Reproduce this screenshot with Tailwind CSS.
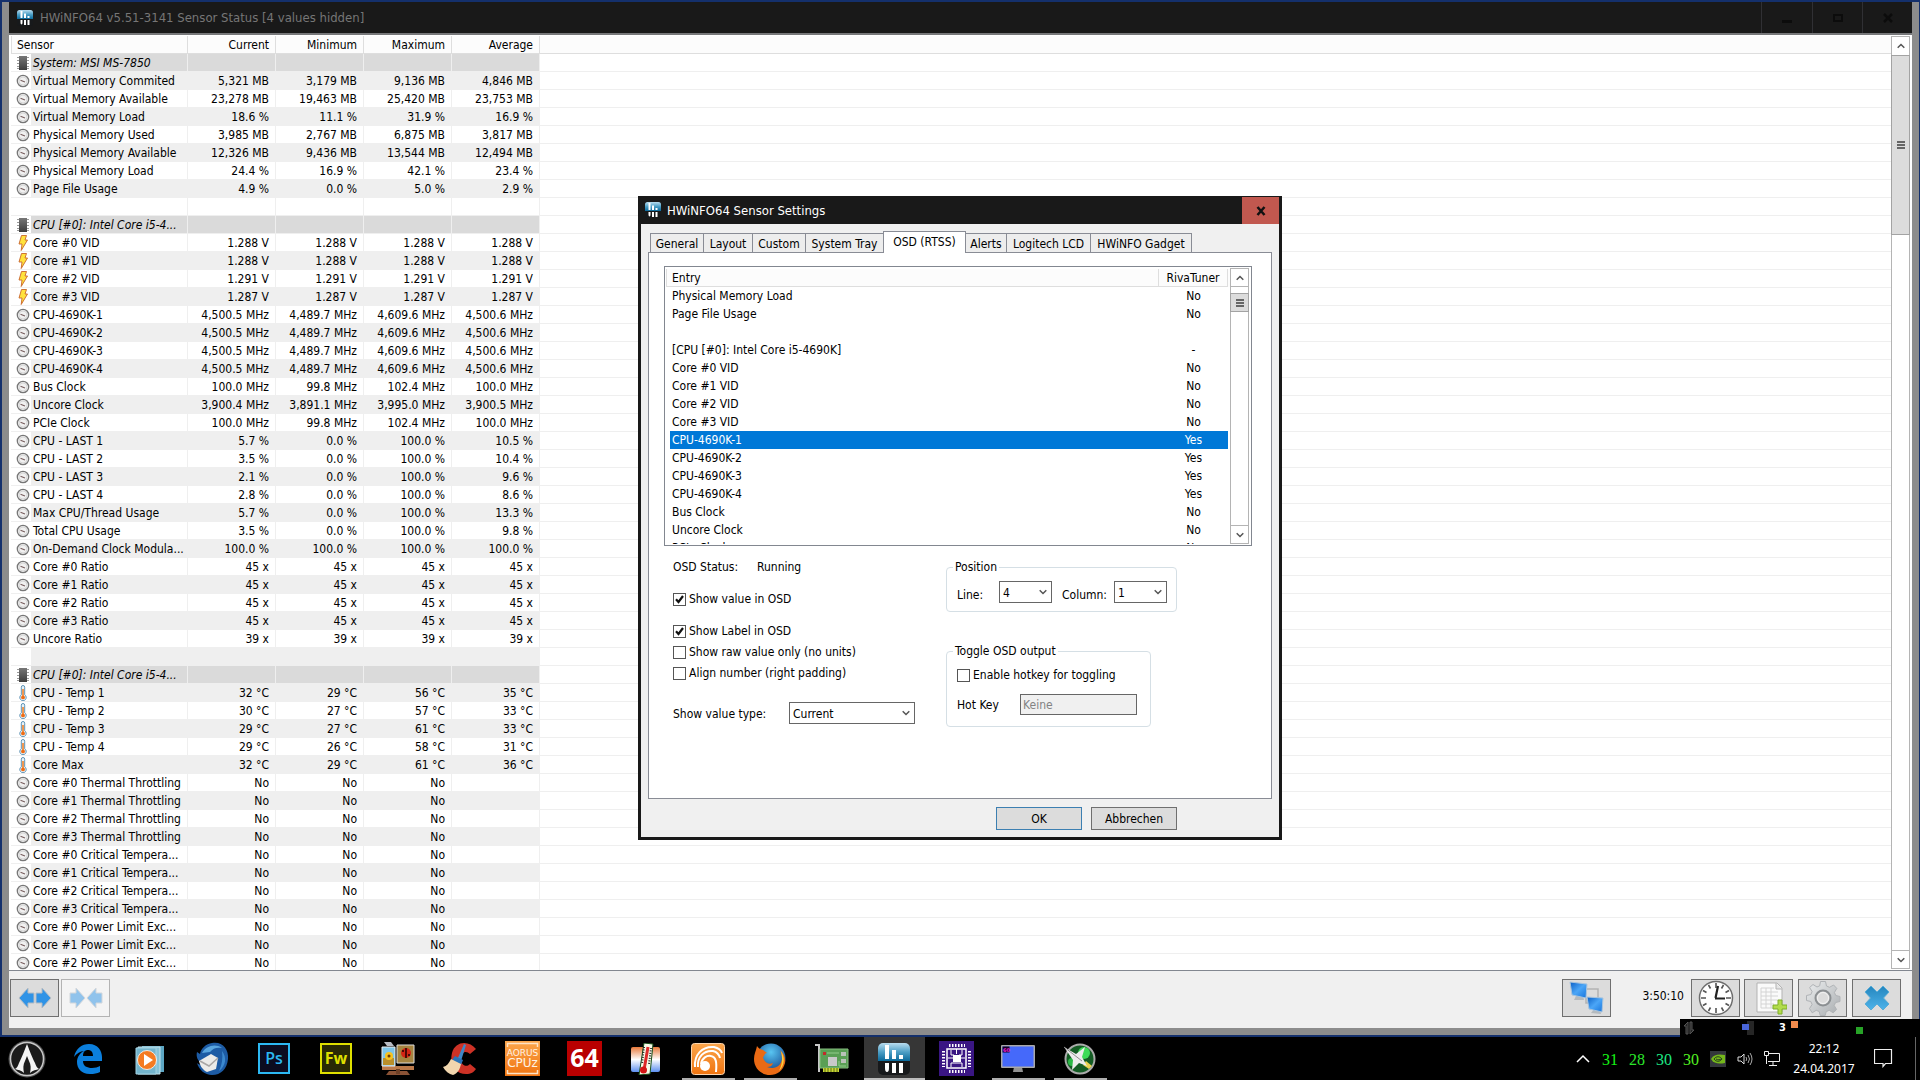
<!DOCTYPE html>
<html lang="de">
<head>
  <meta charset="UTF-8" />
  <meta name="viewport" content="width=device-width, initial-scale=1" />
  <title>HWiNFO64 Sensor Status</title>
  <script src="https://cdn.jsdelivr.net/npm/@tailwindcss/browser@4"></script>
</head>
<body class="relative flex h-screen flex-col overflow-hidden bg-[#14306c] font-['DejaVu_Sans_Condensed','Noto_Sans',sans-serif] text-xs text-black">

  <!-- Shared icons -->
  <svg class="absolute size-0" xmlns="http://www.w3.org/2000/svg">
    <defs>
      <linearGradient id="blueTop" x1="0" y1="0" x2="0" y2="1">
        <stop offset="0" stop-color="#b9dcee" /><stop offset=".5" stop-color="#4d9fc6" /><stop offset="1" stop-color="#0a6899" />
      </linearGradient>
      <linearGradient id="chipGrad" x1="0" y1="0" x2="0" y2="1">
        <stop offset="0" stop-color="#777" /><stop offset="1" stop-color="#3d3d3d" />
      </linearGradient>
      <linearGradient id="orangeGrad" x1="0" y1="0" x2="0" y2="1">
        <stop offset="0" stop-color="#fba64c" /><stop offset="1" stop-color="#f07410" />
      </linearGradient>
      <linearGradient id="screenGrad" x1="0" y1="0" x2="1" y2="1">
        <stop offset="0" stop-color="#0b5fc6" /><stop offset=".5" stop-color="#4ba6f7" /><stop offset="1" stop-color="#1673dc" />
      </linearGradient>
      <linearGradient id="crossGrad" x1="0" y1="0" x2="0" y2="1">
        <stop offset="0" stop-color="#2586be" /><stop offset="1" stop-color="#4db3ea" />
      </linearGradient>
      <linearGradient id="gearGrad" x1="0" y1="0" x2="1" y2="1">
        <stop offset="0" stop-color="#eceeef" /><stop offset="1" stop-color="#a9adb0" />
      </linearGradient>
      <radialGradient id="foxBlue" cx=".5" cy=".3" r=".7">
        <stop offset="0" stop-color="#59c5f2" /><stop offset="1" stop-color="#12468e" />
      </radialGradient>
    </defs>
    <symbol id="hwinfo" viewBox="0 0 32 32">
      <rect width="32" height="32" rx="5" fill="#17191b" />
      <path d="M5 0h22a5 5 0 0 1 5 5v13H0V5a5 5 0 0 1 5-5z" fill="url(#blueTop)" />
      <path d="M7 2h4v14H7zM14 7h4v9h-4zM21 12h4v4h-4zM7 20h4v5q0 4-2 4t-2-4zM14 20h4v10h-4zM21 20h4v10h-4z" fill="#fff" />
    </symbol>
    <symbol id="chip" viewBox="0 0 12 14">
      <path d="M0 1.500h12M0 4.500h12M0 7.500h12M0 10.500h12M0 12.500h12" stroke="#999" />
      <rect x="2" width="8" height="14" fill="url(#chipGrad)" />
    </symbol>
    <symbol id="gauge" viewBox="0 0 14 14">
      <circle cx="7" cy="7" r="5.700" fill="#f1f1f1" stroke="#777" stroke-width="1.300" />
      <circle cx="7" cy="7" r="4" fill="none" stroke="#cfcfcf" stroke-width=".8" />
      <path d="M4.500 6.300 9 8" stroke="#765c5c" stroke-width="1.100" />
    </symbol>
    <symbol id="bolt" viewBox="0 0 10 16">
      <path d="M3.500.5h5L7 5h2.500L3.200 15.500 4 9H1z" fill="#ffe23c" stroke="#c8642a" stroke-width=".9" />
    </symbol>
    <symbol id="thermo" viewBox="0 0 8 16">
      <path d="M2.300 2.200a1.700 1.700 0 0 1 3.400 0v7.600a3.200 3.200 0 1 1-3.400 0z" fill="#e8f3fa" stroke="#5e93b5" />
      <path d="M4 4v8" stroke="#f07a1c" stroke-width="1.500" />
      <circle cx="4" cy="12.400" r="1.900" fill="#ef6c14" />
    </symbol>
    <symbol id="chevUp" viewBox="0 0 8 6"><path d="M.7 4.800 4 1.500l3.300 3.300" fill="none" stroke="#555" stroke-width="1.500" /></symbol>
    <symbol id="chevDown" viewBox="0 0 8 6"><path d="M.7 1.200 4 4.500l3.300-3.300" fill="none" stroke="#555" stroke-width="1.500" /></symbol>
    <symbol id="grip" viewBox="0 0 8 8"><path d="M0 1h8M0 4h8M0 7h8" stroke="#666" stroke-width="2" /></symbol>
    <symbol id="check" viewBox="0 0 13 13"><path d="M3 6.200 5.500 9 10 3" fill="none" stroke="#111" stroke-width="2.200" /></symbol>
    <symbol id="arrowLeft" viewBox="0 0 17 22"><path d="M1 11 10 1v5h6v10h-6v5z" fill="#2f93e6" stroke="#b4bcc4" /></symbol>
    <symbol id="arrowRight" viewBox="0 0 17 22"><path d="M16 11 7 1v5H1v10h6v5z" fill="#2f93e6" stroke="#b4bcc4" /></symbol>
  </svg>

  <!-- Sensor status window -->
  <div class="mt-0.5 mr-px mb-0.5 ml-0.5 flex min-h-0 flex-1 flex-col border-x-7 border-b-7 border-[#8c8c8c] bg-[#f0f0f0]">
    <header class="flex h-[33px] shrink-0 items-stretch border-b-2 border-[#77787a] bg-[#191919]">
      <div class="flex flex-1 items-center gap-[7px] pl-2">
        <svg class="size-4"><use href="#hwinfo" /></svg>
        <h1 class="pt-px text-[13px] text-[#767676]">HWiNFO64 v5.51-3141 Sensor Status [4 values hidden]</h1>
      </div>
      <button class="grid w-[51px] place-items-center border-l border-[#303034]" aria-label="Minimize">
        <svg class="h-3 w-2.5" viewBox="0 0 10 12"><path d="M0 9.500h10" stroke="#0c0c0c" stroke-width="3" /></svg>
      </button>
      <button class="grid w-[50px] place-items-center border-l border-[#303034]" aria-label="Maximize">
        <svg class="h-2 w-2.5" viewBox="0 0 10 8"><path d="M1 1h8v6H1z" fill="none" stroke="#0c0c0c" stroke-width="2" /></svg>
      </button>
      <button class="grid w-[50px] place-items-center border-l border-[#303034]" aria-label="Close">
        <svg class="size-2.5" viewBox="0 0 10 10"><path d="m1 1 8 8m0-8L1 9" stroke="#0c0c0c" stroke-width="2.500" /></svg>
      </button>
    </header>

    <div class="flex min-h-0 flex-1 border-b border-[#828790] bg-white pt-px pr-0.5 pl-0.5">
      <div class="min-w-0 flex-1 overflow-hidden">
        <table class="w-full table-fixed border-separate border-spacing-0">
          <colgroup>
            <col class="w-5" /><col class="w-[157px]" /><col class="w-[88px]" /><col class="w-[88px]" /><col class="w-[88px]" /><col class="w-[88px]" /><col />
          </colgroup>
          <thead>
            <tr class="h-[18px] bg-[#fcfcfc] leading-4">
              <th colspan="2" class="border-r border-b border-l border-[#dedede] p-0 pt-px pl-[5px] text-left font-normal">Sensor</th>
              <th class="border-r border-b border-[#dedede] p-0 pt-px pr-1.5 text-right font-normal">Current</th>
              <th class="border-r border-b border-[#dedede] p-0 pt-px pr-1.5 text-right font-normal">Minimum</th>
              <th class="border-r border-b border-[#dedede] p-0 pt-px pr-1.5 text-right font-normal">Maximum</th>
              <th class="border-r border-b border-[#dedede] p-0 pt-px pr-1.5 text-right font-normal">Average</th>
              <th class="border-b border-[#dedede] p-0"></th>
            </tr>
          </thead>
          <tbody id="sensorRows"></tbody>
        </table>
      </div>
      <!-- Scrollbar -->
      <div class="mb-px flex w-[19px] flex-col border border-[#b4b4b4] bg-white">
        <button class="grid h-[18px] place-items-center" aria-label="Scroll up"><svg class="h-1.5 w-2"><use href="#chevUp" /></svg></button>
        <div class="-mx-px grid h-[180px] place-items-center border border-[#a3a3a3] bg-[#dcdcdc]"><svg class="size-2"><use href="#grip" /></svg></div>
        <button class="mt-auto grid h-[18px] place-items-center border-t border-[#b4b4b4]" aria-label="Scroll down"><svg class="h-1.5 w-2"><use href="#chevDown" /></svg></button>
      </div>
    </div>

    <!-- Toolbar -->
    <footer class="flex h-[57px] shrink-0 items-start gap-1 pt-2 pr-[11px] pl-px">
      <button class="flex h-[38px] w-[49px] items-center justify-center border border-[#6f6f6f] bg-[#dcdcdc]" aria-label="Expand columns">
        <svg class="h-[22px] w-[17px]"><use href="#arrowLeft" /></svg><svg class="h-[22px] w-[17px]"><use href="#arrowRight" /></svg>
      </button>
      <button class="-ml-0.5 flex h-[38px] w-[49px] items-center justify-center border border-[#b3b3b3] bg-[#f4f4f4]" aria-label="Shrink columns" disabled>
        <svg class="h-[22px] w-[17px] opacity-50"><use href="#arrowRight" /></svg><svg class="h-[22px] w-[17px] opacity-50"><use href="#arrowLeft" /></svg>
      </button>
      <button class="ml-auto grid h-[38px] w-[49px] place-items-center border border-[#6f6f6f] bg-[#dcdcdc]" aria-label="Remote sensors">
        <svg class="h-9 w-9" viewBox="0 0 36 36">
          <path d="M18 9h11v10M17 18v5h5" fill="none" stroke="#b2b2b2" stroke-width="1.500" />
          <path d="m8 14 6 1 1 5H5zM26 28l5 1 1 5-10-1z" fill="#b5babe" />
          <path d="m1 2 17 2-1 14-14-3z" fill="url(#screenGrad)" stroke="#a9c4dd" />
          <path d="m18 17 16 1-1 14-13-3z" fill="url(#screenGrad)" stroke="#a9c4dd" />
        </svg>
      </button>
      <span class="ml-[26px] w-[43px] pt-[9px] text-right whitespace-nowrap">3:50:10</span>
      <button class="ml-[3px] grid h-[38px] w-[49px] place-items-center border border-[#6f6f6f] bg-[#dcdcdc]" aria-label="Reset clock">
        <svg class="h-9 w-9" viewBox="0 0 36 36">
          <circle cx="18" cy="18" r="16.500" fill="#fff" stroke="#6e6e6e" stroke-width="1.500" />
          <g stroke="#555" stroke-width="1.600">
            <path d="M18 3v5M18 28v5M3 18h5M28 18h5" />
            <path d="m25.500 5-2 3.500M10.500 5l2 3.500M31 10.500l-3.500 2M5 10.500l3.500 2M31 25.500l-3.500-2M5 25.500l3.500-2M25.500 31l-2-3.500M10.500 31l2-3.500" />
          </g>
          <path d="M17.500 18 20 6M17 18.500h10" stroke="#222" stroke-width="2.200" fill="none" />
        </svg>
      </button>
      <button class="grid h-[38px] w-[49px] place-items-center border border-[#6f6f6f] bg-[#dcdcdc]" aria-label="Start logging">
        <svg class="h-9 w-9" viewBox="0 0 36 36">
          <path d="M6 3h20l5 5v24H6z" fill="#fafafa" stroke="#b3b3b3" />
          <path d="M25 3v6h6" fill="#e4e4e4" stroke="#b3b3b3" />
          <path d="M10 8h13M10 12h17M10 16h17M10 20h17M10 24h13M10 28h12M10 8v20M15 8v20M20 8v20" stroke="#d4d4d4" />
          <path d="M27 20h4v5h5v4h-5v5h-4v-5h-5v-4h5z" fill="#b2dc4b" stroke="#7fae2a" />
        </svg>
      </button>
      <button class="ml-px grid h-[38px] w-[49px] place-items-center border border-[#6f6f6f] bg-[#dcdcdc]" aria-label="Settings">
        <svg class="h-9 w-9" viewBox="0 0 36 36">
          <path d="M15.500 1.500h5l1 4.500 3 1.300L28.600 5l3.200 3.400-2.400 4.100 1.400 3 4.200 1v5l-4.400 1-1.400 3 2.400 4-3.400 3.300-4-2.500-3 1.400-1 3.800h-5l-1-4-3-1.200-4 2.500L4.500 28.500l2.600-4-1.300-3L1.500 20.500v-5l4.400-1 1.200-3-2.500-4L8 4.500 12 7l2.700-1.200z" fill="url(#gearGrad)" stroke="#b0b3b6" />
          <circle cx="18" cy="18" r="7.500" fill="#dcdcdc" stroke="#8b8f92" stroke-width="2" />
          <circle cx="18" cy="18" r="5.500" fill="#dcdcdc" stroke="#f3f3f3" />
        </svg>
      </button>
      <button class="ml-px grid h-[38px] w-[49px] place-items-center border border-[#6f6f6f] bg-[#dcdcdc]" aria-label="Quit">
        <svg class="h-[26px] w-[26px]" viewBox="0 0 26 26"><path d="m7 1 6 6 6-6 6 6-5.500 6 5.500 6-6 6-6-6-6 6-6-6 5.500-6L1 7z" fill="url(#crossGrad)" stroke="#59acd6" /></svg>
      </button>
    </footer>
  </div>

  <!-- Taskbar -->
  <nav class="flex h-[43px] shrink-0 items-stretch bg-black text-white">
    <a href="#" class="grid w-[57px] place-items-center" aria-label="Start">
      <svg class="-ml-1 size-10" viewBox="0 0 40 40">
        <circle cx="20" cy="20" r="18.500" fill="#555" /><circle cx="20" cy="20" r="16.500" fill="#1b1b1b" stroke="#c9c9c9" stroke-width="1.500" />
        <path d="M20 5c2 5 5 13 8 19 1 3 2 5 4 6-3 1-6 1-9 4 1-5 1-8-1-12l-2-5-2 5c-2 4-2 7-1 12-3-3-6-3-9-4 2-1 3-3 4-6 3-6 6-14 8-19z" fill="#f4f4f4" />
      </svg>
    </a>
    <a href="#" class="grid w-[62px] place-items-center" aria-label="Edge">
      <svg class="size-8" viewBox="0 0 32 32"><path d="M2 14C4 5 10 1 17 1c9 0 13 7 13 13v4H11c0 5 4 7 9 7 3 0 6-1 8-2v6c-3 1.500-6 2-10 2C9 31 5 25 5 19c0-5 3-9 7-11-4 .5-7 2-10 6zm9-1h10c0-4-2-6-5-6s-5 2-5 6z" fill="#0b7fdd" /></svg>
    </a>
    <a href="#" class="grid w-[62px] place-items-center" aria-label="Media Player">
      <svg class="h-8 w-8" viewBox="0 0 32 32">
        <path d="M8 3h22v26H8z" fill="#5da7c4" /><path d="M4 4h22v27H4z" fill="#86c3d8" stroke="#c6e3ec" /><path d="M2 5h20v26H2z" fill="#73b4cc" stroke="#a4d3e3" />
        <circle cx="13" cy="17" r="9.500" fill="#f47b22" stroke="#fff" stroke-width=".8" /><path d="m10 11 9 6-9 6z" fill="#fff" />
      </svg>
    </a>
    <a href="#" class="grid w-[62px] place-items-center" aria-label="Thunderbird">
      <svg class="size-9" viewBox="0 0 36 36">
        <path d="M18 2c10-2 17 6 16 16-1 10-7 16-16 16-7 0-13-5-15-12 2 2 4 2 6 1-6-3-7-8-6-12l3 2C7 7 12 3 18 2z" fill="#1d5ba4" />
        <path d="M8 12c4-7 13-10 20-5-5-1-9 0-12 4z" fill="#59a5de" /><path d="M28 10c5 6 4 15-3 20 3-6 4-13 3-20z" fill="#3c89ce" />
        <path d="m5 20 12-7 7 4-2 11-9 3c-4-2-7-6-8-11z" fill="#ecebe9" /><path d="m6 20 9 5 9-8" fill="none" stroke="#a9a6a5" stroke-width="1.500" />
      </svg>
    </a>
    <a href="#" class="grid w-[62px] place-items-center" aria-label="Photoshop">
      <svg class="h-8 w-8" viewBox="0 0 32 32"><rect x="1" y="1" width="30" height="29" fill="#0b0c20" stroke="#2cb8f2" stroke-width="2" /><text x="16" y="21" fill="#2cb8f2" text-anchor="middle" font-family="Open Sans, sans-serif" font-size="16" font-weight="600">Ps</text></svg>
    </a>
    <a href="#" class="grid w-[62px] place-items-center" aria-label="Fireworks">
      <svg class="h-8 w-8" viewBox="0 0 32 32"><rect x="1" y="1" width="30" height="29" fill="#292a05" stroke="#dfe000" stroke-width="2" /><text x="16" y="21" fill="#dfe000" text-anchor="middle" font-family="Open Sans, sans-serif" font-size="16" font-weight="700">Fw</text></svg>
    </a>
    <a href="#" class="grid w-[62px] place-items-center" aria-label="Picture viewer">
      <svg class="size-9" viewBox="0 0 36 36">
        <path d="M9 30h18l3 4H6z" fill="#8a5235" /><path d="M2 25h32v4H2z" fill="#bb7a4b" /><path d="M16 28h4v5h-4z" fill="#6c3f26" />
        <path d="M2 6h13v19H2z" fill="#7ec5e8" stroke="#eee" /><path d="M3 17h11v7H3z" fill="#b98f2b" /><circle cx="9" cy="15" r="4" fill="#f7c21f" /><circle cx="9" cy="15" r="1.500" fill="#6b3c08" />
        <path d="M17 4h17v18H17z" fill="#a5843f" stroke="#ddd" /><circle cx="26" cy="12" r="5" fill="#d32414" /><path d="M26 7v10M22 10h2M28 14h2" stroke="#200" stroke-width="1.500" /><path d="M4 1h7l3 4H7z" fill="#b9bcc4" />
      </svg>
    </a>
    <a href="#" class="grid w-[62px] place-items-center" aria-label="CCleaner">
      <svg class="size-9" viewBox="0 0 36 36">
        <path d="M34 8C27-1 13 0 10 12c-3 12 4 21 14 21 5 0 8-2 10-5l-6-5c-4 4-9 1-9-5 0-7 5-9 9-5z" fill="#cd3226" />
        <path d="m22 3 2 1-5 16-4-1z" fill="#3e87c7" /><path d="m13 15 8 4-2 5-9-5z" fill="#2a73b8" /><path d="m9 18 10 5c-1 5-3 9-8 11-4-1-8-4-10-8 4-1 6-4 8-8z" fill="#f1d6ae" />
      </svg>
    </a>
    <a href="#" class="grid w-[62px] place-items-center" aria-label="Aorus CPU-Z">
      <svg class="size-[35px]" viewBox="0 0 35 35">
        <rect width="35" height="35" fill="url(#orangeGrad)" /><path d="M2.500 6V2.500h30V6M2.500 29v3.500h30V29" fill="none" stroke="#fde3c6" stroke-width="1.500" />
        <text x="17.500" y="15" text-anchor="middle" fill="#fff3e4" font-family="DejaVu Sans, sans-serif" font-size="9">AORUS</text>
        <text x="17.500" y="26" text-anchor="middle" fill="#fff3e4" font-family="DejaVu Sans, sans-serif" font-size="12">CPUz</text>
      </svg>
    </a>
    <a href="#" class="grid w-[62px] place-items-center" aria-label="AIDA64">
      <svg class="size-[35px]" viewBox="0 0 35 35"><rect width="35" height="35" fill="#b90000" /><text x="17.500" y="26" text-anchor="middle" fill="#fff" font-family="Noto Sans, sans-serif" font-size="25" font-weight="700">64</text></svg>
    </a>
    <a href="#" class="grid w-[62px] place-items-center" aria-label="Real Temp">
      <svg class="size-8" viewBox="0 0 32 32">
        <defs><linearGradient id="hotCold" x1="0" y1="0" x2="0" y2="1"><stop offset="0" stop-color="#e8793a" /><stop offset=".5" stop-color="#fff" /><stop offset="1" stop-color="#5c8ff0" /></linearGradient></defs>
        <rect x="1" y="4" width="29" height="25" rx="2" fill="url(#hotCold)" />
        <path d="m14 0 9 1-3 30-11 1z" fill="#f7fbe9" stroke="#174d17" /><path d="M18 4 14 27" stroke="#dd2a2a" stroke-width="3" /><path d="M14 4 12 21M21 5l-2 16" stroke="#222" stroke-dasharray="1 1.500" stroke-width="2" /><circle cx="13.500" cy="27" r="3.500" fill="#d41616" />
      </svg>
    </a>
    <a href="#" class="grid w-[62px] place-items-center" aria-label="Feed reader">
      <svg class="col-start-1 row-start-1 h-8 w-[34px]" viewBox="0 0 34 32">
        <rect x=".5" y=".5" width="33" height="31" rx="3" fill="url(#orangeGrad)" stroke="#fbd5ae" />
        <path d="M4 24C3 12 11 3 23 4c4 1 7 3 8 6M7 24C6 14 13 7 22 8c4 1 6 3 7 7M10 21c1-6 6-9 10-8 5 1 6 6 5 16" fill="none" stroke="#fff" stroke-width="2" /><circle cx="14" cy="23" r="5" fill="#fff" />
      </svg>
      <span class="col-start-1 row-start-1 h-0.5 w-[53px] self-end bg-[#aeaeae]"></span>
    </a>
    <a href="#" class="grid w-[62px] place-items-center" aria-label="Firefox">
      <svg class="col-start-1 row-start-1 size-8" viewBox="0 0 32 32">
        <circle cx="17" cy="15" r="14.500" fill="url(#foxBlue)" />
        <path d="M3 3c1 2 3 3 6 4l4 3c-3 0-2 3-4 4 1 5 5 8 10 6-1 3-3 4-6 4 8 3 14-1 15-8 0-4-1-7-2-9 4 4 6 8 5 13-2 8-8 12-15 12C7 32 0 25 0 16 0 11 2 8 3 3z" fill="#ea6a14" /><path d="M27 8c4 6 4 14-2 20 3-6 4-12 2-20z" fill="#ffcf3a" />
      </svg>
      <span class="col-start-1 row-start-1 h-0.5 w-[53px] self-end bg-[#aeaeae]"></span>
    </a>
    <a href="#" class="grid w-[62px] place-items-center" aria-label="GPU-Z">
      <svg class="h-8 w-[34px]" viewBox="0 0 34 32">
        <path d="M0 2h4v27" fill="none" stroke="#c8c8c8" stroke-width="2" /><path d="M5 6h28v19H5z" fill="#5a9f55" stroke="#85bf7f" /><path d="M8 25h16v4H8z" fill="#c9d735" /><path d="M10 25v4M13 25v4M16 25v4M19 25v4M22 25v4" stroke="#5c6b14" />
        <path d="M13 14h9v9h-9z" fill="#c9c9c9" /><path d="M8 9h3v3H8z" fill="#c22b2b" /><path d="M26 9h5v4h-5zM26 16h5v4h-5z" fill="#b9c2b8" /><path d="M12 10h12M24 18v5h7" fill="none" stroke="#93cd8c" />
      </svg>
    </a>
    <a href="#" class="grid w-[62px] place-items-center" aria-label="HWiNFO64">
      <span class="col-start-1 row-start-1 h-full w-[61px] border-b-2 border-[#bdbdbd] bg-[#363636]"></span>
      <svg class="col-start-1 row-start-1 size-8"><use href="#hwinfo" /></svg>
    </a>
    <a href="#" class="grid w-[62px] place-items-center" aria-label="CPU-Z">
      <svg class="size-[35px]" viewBox="0 0 35 35">
        <rect width="35" height="35" fill="#3a1683" />
        <g fill="none" stroke="#fff"><rect x="8" y="8" width="19" height="19" stroke-width="1.500" />
          <path d="M10 4.500h16M10 30.500h16M4.500 10v16M30.500 10v16" stroke-width="3" stroke-dasharray="1.500 1.500" />
          <path d="M12 9v5h3M23 9v5h-3M12 26v-4h11v4M17.500 8v5M9 17h5M21 17h5" /></g>
        <rect x="14" y="14" width="8" height="7" fill="#fff" />
      </svg>
    </a>
    <a href="#" class="grid w-[62px] place-items-center" aria-label="Desktop">
      <svg class="col-start-1 row-start-1 h-8 w-[34px]" viewBox="0 0 34 32">
        <path d="M13 24h8l1 5H12z" fill="#929292" /><rect y="2" width="34" height="23" rx="1" fill="#a9a9a9" /><rect x="1.500" y="3.500" width="31" height="20" fill="#4569fa" /><rect x="1.500" y="3.500" width="7" height="6" fill="#160020" /><text x="2" y="9" fill="#f01fd9" font-family="DejaVu Sans, sans-serif" font-size="5" font-weight="700">60</text>
      </svg>
      <span class="col-start-1 row-start-1 h-0.5 w-[53px] self-end bg-[#aeaeae]"></span>
    </a>
    <a href="#" class="grid w-[62px] place-items-center" aria-label="Afterburner">
      <svg class="col-start-1 row-start-1 size-8" viewBox="0 0 32 32">
        <circle cx="16" cy="16" r="14.500" fill="#145c24" stroke="#aaa" stroke-width="2" /><circle cx="20" cy="10" r="6" fill="#3ddb57" /><circle cx="8" cy="19" r="4" fill="#2bb846" /><path d="m22 18 6 5-3 3-6-4z" fill="#e9d04e" />
        <path d="m0 4 12 7 9-7-3 10 5 9-8-3-7 7 1-10z" fill="#ececec" /><path d="m0 4 18 14" stroke="#8e8e8e" />
      </svg>
      <span class="col-start-1 row-start-1 h-0.5 w-[53px] self-end bg-[#aeaeae]"></span>
    </a>

    <!-- Tray -->
    <div class="ml-auto flex items-center">
      <svg class="mr-3 h-[9px] w-[14px]" viewBox="0 0 14 9"><path d="m1 8 6-6 6 6" fill="none" stroke="#fff" stroke-width="1.500" /></svg>
      <span class="w-[27px] pt-0.5 font-['Liberation_Serif',serif] text-base text-[#15f315]">31</span>
      <span class="w-[27px] pt-0.5 font-['Liberation_Serif',serif] text-base text-[#2be82b]">28</span>
      <span class="w-[27px] pt-0.5 font-['Liberation_Serif',serif] text-base text-[#1ee884]">30</span>
      <span class="w-[27px] pt-0.5 font-['Liberation_Serif',serif] text-base text-[#53f021]">30</span>
      <svg class="mr-[11px] size-4" viewBox="0 0 16 16"><rect width="16" height="16" fill="#33373c" /><path d="M1 8c3-5 8-5 14-4v8C9 13 4 13 1 8z" fill="#74b71b" /><path d="M4 8c2-3 6-3 8 0-2 3-6 3-8 0zm2 0c2 1 4 1 5 0" fill="none" stroke="#26401a" /></svg>
      <svg class="mr-[11px] size-4" viewBox="0 0 16 16"><path d="M1 6h3l3-3v10l-3-3H1z" fill="none" stroke="#ddd" /><path d="M9 6q1.500 2 0 4M11 4q3 4 0 8M13 2q4 6 0 12" fill="none" stroke="#aaa" /></svg>
      <svg class="h-4 w-4" viewBox="0 0 16 16"><path d="M4 2.500h11.500v8H4M9 11v3M5 14.500h8M.5.500h4v4h-4zM2.500 4v9" fill="none" stroke="#eee" /></svg>
      <div class="mx-3 w-[64px] text-center font-['Noto_Sans',sans-serif] leading-5"><div>22:12</div><div>24.04.2017</div></div>
      <svg class="mr-[22px] ml-[6px] size-[19px]" viewBox="0 0 19 19"><path d="M.5.500h17v14h-6l-2.500 3v-3H.500z" fill="none" stroke="#eee" stroke-width="1.200" /></svg>
      <span class="mr-1 h-full w-px bg-[#666]"></span>
    </div>
  </nav>

  <!-- Keyboard status strip over the taskbar corner -->
  <div class="absolute right-0 bottom-[43px] flex h-[18px] w-[240px] items-center bg-black text-white">
    <svg class="ml-[3px] h-3.5 w-3" viewBox="0 0 12 14"><path d="M3 13V5H1l4-4v12zM7 1v12l4-4H9V1z" fill="#222" stroke="#555" /></svg>
    <svg class="ml-[47px] h-3.5 w-3" viewBox="0 0 12 14"><path d="M5 0h7v14H5z" fill="#262626" /><path d="M0 3h7v6H0z" fill="#4965d8" /></svg>
    <span class="ml-[25px] w-3 text-[11px] font-bold">3</span>
    <span class="-mt-2 size-[7px] bg-[#f08a4c]"></span>
    <span class="mt-1 ml-[58px] size-[7px] bg-[#27a327]"></span>
  </div>

  <!-- Sensor settings dialog, centred on the work area -->
  <div class="absolute inset-x-0 top-0 bottom-[44px] grid place-items-center">
    <div role="dialog" aria-labelledby="dialogTitle" class="flex h-[644px] w-[644px] flex-col border-x-3 border-b-3 border-[#191919] bg-[#f0f0f0]">
      <div class="flex h-7 shrink-0 items-center bg-[#191919] pl-1 text-white">
        <svg class="size-4"><use href="#hwinfo" /></svg>
        <h2 id="dialogTitle" class="ml-1.5 flex-1 pt-0.5 text-[13px]">HWiNFO64 Sensor Settings</h2>
        <button class="mt-px grid h-[27px] w-[37px] place-items-center bg-[#c1584f]" aria-label="Close">
          <svg class="size-2.5" viewBox="0 0 10 10"><path d="m1.500 1 7 8m0-8-7 8" stroke="#111" stroke-width="2.500" /></svg>
        </button>
      </div>

      <div class="flex min-h-0 flex-1 flex-col px-[7px] pt-[7px]">
        <div role="tablist" class="z-10 -mb-px flex h-[22px] items-end pl-0.5 leading-4 whitespace-nowrap">
          <button role="tab" class="mb-px h-[19px] w-[54px] border border-b-0 border-[#898c95] bg-[#ededed] pt-px">General</button>
          <button role="tab" class="-ml-px mb-px h-[19px] w-[50px] border border-b-0 border-[#898c95] bg-[#ededed] pt-px">Layout</button>
          <button role="tab" class="-ml-px mb-px h-[19px] w-[54px] border border-b-0 border-[#898c95] bg-[#ededed] pt-px">Custom</button>
          <button role="tab" class="-ml-px mb-px h-[19px] w-[79px] border border-b-0 border-[#898c95] bg-[#ededed] pt-px">System Tray</button>
          <button role="tab" aria-selected="true" class="-ml-px h-[22px] w-[83px] border border-b-0 border-[#898c95] bg-white pb-0.5">OSD (RTSS)</button>
          <button role="tab" class="-ml-px mb-px h-[19px] w-[42px] border border-b-0 border-[#898c95] bg-[#ededed] pt-px">Alerts</button>
          <button role="tab" class="-ml-px mb-px h-[19px] w-[85px] border border-b-0 border-[#898c95] bg-[#ededed] pt-px">Logitech LCD</button>
          <button role="tab" class="-ml-px mb-px h-[19px] w-[102px] border border-b-0 border-[#898c95] bg-[#ededed] pt-px">HWiNFO Gadget</button>
        </div>

        <div role="tabpanel" class="h-[547px] border border-[#898c95] bg-white pt-[13px] pr-[19px] pl-[15px]">
          <!-- Entry list -->
          <div class="flex h-[280px] border border-[#828790] p-px pr-0.5">
            <div class="min-w-0 flex-1 overflow-hidden pt-px">
              <table class="w-full table-fixed border-separate border-spacing-0">
                <colgroup><col /><col class="w-[69px]" /><col class="w-0.5" /></colgroup>
                <thead>
                  <tr class="h-[18px] bg-[#fcfcfc] leading-4">
                    <th class="border-x border-b border-[#dedede] p-0 pt-px pl-[5px] text-left font-normal">Entry</th>
                    <th class="border-r border-b border-[#dedede] p-0 pt-px font-normal">RivaTuner</th>
                    <th class="p-0"></th>
                  </tr>
                </thead>
                <tbody id="entryRows"></tbody>
              </table>
            </div>
            <div class="flex w-[19px] flex-col border border-[#b4b4b4] bg-white">
              <button class="grid h-[18px] place-items-center border-b border-[#b4b4b4]" aria-label="Scroll up"><svg class="h-1.5 w-2"><use href="#chevUp" /></svg></button>
              <div class="-mx-px mt-1.5 grid h-[19px] place-items-center border border-[#a3a3a3] bg-[#dcdcdc]"><svg class="size-2"><use href="#grip" /></svg></div>
              <button class="mt-auto grid h-[18px] place-items-center border-t border-[#b4b4b4]" aria-label="Scroll down"><svg class="h-1.5 w-2"><use href="#chevDown" /></svg></button>
            </div>
          </div>

          <div class="flex items-start pt-[13px] pl-[9px] leading-4">
            <!-- OSD options -->
            <div class="w-[273px]">
              <div class="flex"><span class="w-[84px]">OSD Status:</span><span>Running</span></div>
              <label class="mt-4 flex items-center gap-[3px]">
                <span class="grid"><input type="checkbox" checked class="col-start-1 row-start-1 size-[13px] appearance-none border border-[#555] bg-white" /><svg class="pointer-events-none col-start-1 row-start-1 size-[13px]"><use href="#check" /></svg></span>
                Show value in OSD
              </label>
              <label class="mt-4 flex items-center gap-[3px]">
                <span class="grid"><input type="checkbox" checked class="col-start-1 row-start-1 size-[13px] appearance-none border border-[#555] bg-white" /><svg class="pointer-events-none col-start-1 row-start-1 size-[13px]"><use href="#check" /></svg></span>
                Show Label in OSD
              </label>
              <label class="mt-[5px] flex items-center gap-[3px]">
                <input type="checkbox" class="size-[13px] appearance-none border border-[#555] bg-white" />
                Show raw value only (no units)
              </label>
              <label class="mt-[5px] flex items-center gap-[3px]">
                <input type="checkbox" class="size-[13px] appearance-none border border-[#555] bg-white" />
                Align number (right padding)
              </label>
              <div class="mt-[21px] flex items-center">
                <label for="valueType" class="w-[116px] pt-px">Show value type:</label>
                <div class="grid items-center">
                  <select id="valueType" class="col-start-1 row-start-1 h-[22px] w-[126px] appearance-none border border-[#666] bg-white pt-px pl-[3px]"><option>Current</option></select>
                  <svg class="pointer-events-none col-start-1 row-start-1 mr-[5px] h-1.5 w-2 justify-self-end"><use href="#chevDown" /></svg>
                </div>
              </div>
            </div>

            <div>
              <fieldset class="h-[53px] w-[231px] rounded-sm border border-[#d5dfe5] pl-2.5">
                <legend class="-ml-1 px-0.5">Position</legend>
                <div class="flex items-center pt-1.5">
                  <label for="osdLine" class="w-[42px] pt-1.5">Line:</label>
                  <div class="grid items-center">
                    <select id="osdLine" class="col-start-1 row-start-1 h-[22px] w-[53px] appearance-none border border-[#666] bg-white pt-px pl-[3px]"><option>4</option></select>
                    <svg class="pointer-events-none col-start-1 row-start-1 mr-[5px] h-1.5 w-2 justify-self-end"><use href="#chevDown" /></svg>
                  </div>
                  <label for="osdColumn" class="ml-2.5 w-[52px] pt-1.5">Column:</label>
                  <div class="grid items-center">
                    <select id="osdColumn" class="col-start-1 row-start-1 h-[22px] w-[53px] appearance-none border border-[#666] bg-white pt-px pl-[3px]"><option>1</option></select>
                    <svg class="pointer-events-none col-start-1 row-start-1 mr-[5px] h-1.5 w-2 justify-self-end"><use href="#chevDown" /></svg>
                  </div>
                </div>
              </fieldset>
              <fieldset class="mt-[31px] h-[84px] w-[205px] rounded-sm border border-[#d5dfe5] pl-2.5">
                <legend class="-ml-1 px-0.5">Toggle OSD output</legend>
                <label class="mt-2 flex items-center gap-[3px]">
                  <input type="checkbox" class="size-[13px] appearance-none border border-[#555] bg-white" />
                  Enable hotkey for toggling
                </label>
                <div class="mt-[11px] flex items-center">
                  <label for="hotKey" class="w-[63px]">Hot Key</label>
                  <input id="hotKey" type="text" value="Keine" disabled class="h-[21px] w-[117px] border border-[#666] bg-[#f0f0f0] px-0.5 text-[#838383]" />
                </div>
              </fieldset>
            </div>
          </div>
        </div>

        <div class="flex gap-[9px] pt-2 pr-[95px]">
          <button class="ml-auto h-[23px] w-[86px] border border-[#3c7fb1] bg-[#dcdcdc]">OK</button>
          <button class="h-[23px] w-[86px] border border-[#6f6f6f] bg-[#dcdcdc]">Abbrechen</button>
        </div>
      </div>
    </div>
  </div>

  <script>
    // [icon, name, current, minimum, maximum, average]; "head" starts a group, [] is a spacer
    const sensors = [
      ['head', 'System: MSI MS-7850'],
      ['gauge', 'Virtual Memory Commited', '5,321 MB', '3,179 MB', '9,136 MB', '4,846 MB'],
      ['gauge', 'Virtual Memory Available', '23,278 MB', '19,463 MB', '25,420 MB', '23,753 MB'],
      ['gauge', 'Virtual Memory Load', '18.6 %', '11.1 %', '31.9 %', '16.9 %'],
      ['gauge', 'Physical Memory Used', '3,985 MB', '2,767 MB', '6,875 MB', '3,817 MB'],
      ['gauge', 'Physical Memory Available', '12,326 MB', '9,436 MB', '13,544 MB', '12,494 MB'],
      ['gauge', 'Physical Memory Load', '24.4 %', '16.9 %', '42.1 %', '23.4 %'],
      ['gauge', 'Page File Usage', '4.9 %', '0.0 %', '5.0 %', '2.9 %'],
      [],
      ['head', 'CPU [#0]: Intel Core i5-4...'],
      ['bolt', 'Core #0 VID', '1.288 V', '1.288 V', '1.288 V', '1.288 V'],
      ['bolt', 'Core #1 VID', '1.288 V', '1.288 V', '1.288 V', '1.288 V'],
      ['bolt', 'Core #2 VID', '1.291 V', '1.291 V', '1.291 V', '1.291 V'],
      ['bolt', 'Core #3 VID', '1.287 V', '1.287 V', '1.287 V', '1.287 V'],
      ['gauge', 'CPU-4690K-1', '4,500.5 MHz', '4,489.7 MHz', '4,609.6 MHz', '4,500.6 MHz'],
      ['gauge', 'CPU-4690K-2', '4,500.5 MHz', '4,489.7 MHz', '4,609.6 MHz', '4,500.6 MHz'],
      ['gauge', 'CPU-4690K-3', '4,500.5 MHz', '4,489.7 MHz', '4,609.6 MHz', '4,500.6 MHz'],
      ['gauge', 'CPU-4690K-4', '4,500.5 MHz', '4,489.7 MHz', '4,609.6 MHz', '4,500.6 MHz'],
      ['gauge', 'Bus Clock', '100.0 MHz', '99.8 MHz', '102.4 MHz', '100.0 MHz'],
      ['gauge', 'Uncore Clock', '3,900.4 MHz', '3,891.1 MHz', '3,995.0 MHz', '3,900.5 MHz'],
      ['gauge', 'PCIe Clock', '100.0 MHz', '99.8 MHz', '102.4 MHz', '100.0 MHz'],
      ['gauge', 'CPU - LAST 1', '5.7 %', '0.0 %', '100.0 %', '10.5 %'],
      ['gauge', 'CPU - LAST 2', '3.5 %', '0.0 %', '100.0 %', '10.4 %'],
      ['gauge', 'CPU - LAST 3', '2.1 %', '0.0 %', '100.0 %', '9.6 %'],
      ['gauge', 'CPU - LAST 4', '2.8 %', '0.0 %', '100.0 %', '8.6 %'],
      ['gauge', 'Max CPU/Thread Usage', '5.7 %', '0.0 %', '100.0 %', '13.3 %'],
      ['gauge', 'Total CPU Usage', '3.5 %', '0.0 %', '100.0 %', '9.8 %'],
      ['gauge', 'On-Demand Clock Modula...', '100.0 %', '100.0 %', '100.0 %', '100.0 %'],
      ['gauge', 'Core #0 Ratio', '45 x', '45 x', '45 x', '45 x'],
      ['gauge', 'Core #1 Ratio', '45 x', '45 x', '45 x', '45 x'],
      ['gauge', 'Core #2 Ratio', '45 x', '45 x', '45 x', '45 x'],
      ['gauge', 'Core #3 Ratio', '45 x', '45 x', '45 x', '45 x'],
      ['gauge', 'Uncore Ratio', '39 x', '39 x', '39 x', '39 x'],
      [],
      ['head', 'CPU [#0]: Intel Core i5-4...'],
      ['thermo', 'CPU - Temp 1', '32 °C', '29 °C', '56 °C', '35 °C'],
      ['thermo', 'CPU - Temp 2', '30 °C', '27 °C', '57 °C', '33 °C'],
      ['thermo', 'CPU - Temp 3', '29 °C', '27 °C', '61 °C', '33 °C'],
      ['thermo', 'CPU - Temp 4', '29 °C', '26 °C', '58 °C', '31 °C'],
      ['thermo', 'Core Max', '32 °C', '29 °C', '61 °C', '36 °C'],
      ['gauge', 'Core #0 Thermal Throttling', 'No', 'No', 'No'],
      ['gauge', 'Core #1 Thermal Throttling', 'No', 'No', 'No'],
      ['gauge', 'Core #2 Thermal Throttling', 'No', 'No', 'No'],
      ['gauge', 'Core #3 Thermal Throttling', 'No', 'No', 'No'],
      ['gauge', 'Core #0 Critical Tempera...', 'No', 'No', 'No'],
      ['gauge', 'Core #1 Critical Tempera...', 'No', 'No', 'No'],
      ['gauge', 'Core #2 Critical Tempera...', 'No', 'No', 'No'],
      ['gauge', 'Core #3 Critical Tempera...', 'No', 'No', 'No'],
      ['gauge', 'Core #0 Power Limit Exc...', 'No', 'No', 'No'],
      ['gauge', 'Core #1 Power Limit Exc...', 'No', 'No', 'No'],
      ['gauge', 'Core #2 Power Limit Exc...', 'No', 'No', 'No']
    ];

    const icons = {
      head: '<svg class="mx-auto h-3.5 w-3"><use href="#chip" /></svg>',
      gauge: '<svg class="mx-auto size-3.5"><use href="#gauge" /></svg>',
      bolt: '<svg class="mx-auto h-4 w-2.5"><use href="#bolt" /></svg>',
      thermo: '<svg class="mx-auto h-4 w-2"><use href="#thermo" /></svg>'
    };

    document.getElementById('sensorRows').innerHTML = sensors.map((row, i) => {
      const [icon, name = '', ...values] = row;
      const head = icon === 'head';
      const fill = head ? 'bg-[#dadada]' : i % 2 ? 'bg-[#efefef]' : 'bg-white';
      const cells = [0, 1, 2, 3].map(n =>
        `<td class="border-r border-b border-[#efefef] p-0 pt-px pr-1.5 text-right whitespace-nowrap ${fill}">${values[n] || ''}</td>`).join('');
      return `<tr class="h-[18px] leading-4">
        <td class="border-b border-[#efefef] p-0 pl-[3px]">${icons[icon] || ''}</td>
        <td class="border-r border-b border-[#efefef] p-0 pt-px pl-0.5 whitespace-nowrap ${head ? 'italic' : ''} ${fill}">${name}</td>
        ${cells}
        <td class="border-b border-[#efefef] p-0"></td>
      </tr>`;
    }).join('');

    const entries = [
      ['Physical Memory Load', 'No'], ['Page File Usage', 'No'], ['', ''],
      ['[CPU [#0]: Intel Core i5-4690K]', '-'],
      ['Core #0 VID', 'No'], ['Core #1 VID', 'No'], ['Core #2 VID', 'No'], ['Core #3 VID', 'No'],
      ['CPU-4690K-1', 'Yes'], ['CPU-4690K-2', 'Yes'], ['CPU-4690K-3', 'Yes'], ['CPU-4690K-4', 'Yes'],
      ['Bus Clock', 'No'], ['Uncore Clock', 'No'], ['PCIe Clock', 'No']
    ];
    const selected = 8;

    document.getElementById('entryRows').innerHTML = entries.map(([name, state], i) => {
      const fill = i === selected ? 'bg-[#0078d7] text-white' : '';
      return `<tr class="h-[18px] leading-[18px]">
        <td class="p-0 pl-1"><div class="h-[18px] pl-0.5 ${fill}">${name}</div></td>
        <td class="p-0 text-center"><div class="h-[18px] ${fill}">${state}</div></td>
        <td class="p-0"></td>
      </tr>`;
    }).join('');
  </script>
</body>
</html>
